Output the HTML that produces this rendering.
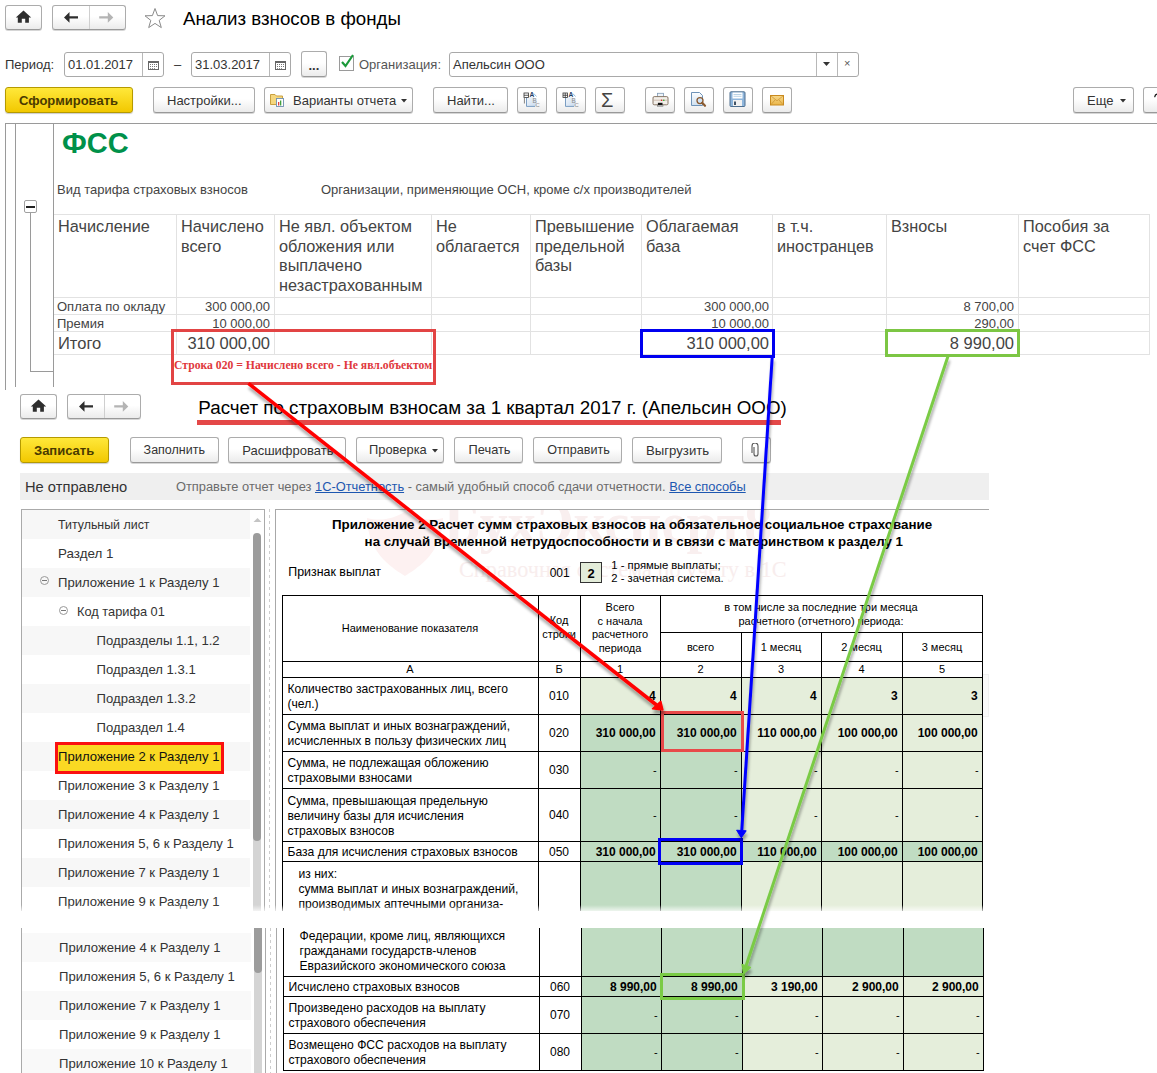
<!DOCTYPE html>
<html><head><meta charset="utf-8">
<style>
*{box-sizing:border-box;margin:0;padding:0}
html,body{width:1157px;height:1073px;overflow:hidden;background:#fff}
body{position:relative;font-family:"Liberation Sans",sans-serif;color:#333}
.a{position:absolute}
.t{position:absolute;white-space:nowrap;line-height:1}
.btn{position:absolute;border:1px solid #acacac;border-bottom-color:#999;border-radius:3px;background:linear-gradient(#fff 45%,#ebebeb);box-shadow:0 1px 0 rgba(0,0,0,.16)}
.ybtn{position:absolute;border:1px solid #b59a00;border-radius:3px;background:linear-gradient(#ffe83a,#f2c800);box-shadow:0 1px 1px rgba(0,0,0,.2)}
.inp{position:absolute;border:1px solid #a9a9a9;border-radius:3px;background:#fff}
.hl{position:absolute;height:1px;background:#e2e2e2}
.vl{position:absolute;width:1px;background:#e2e2e2}
.gl{position:absolute;background:#9a9a9a}
</style></head><body>

<!-- ============ TOP WINDOW ============ -->
<div class="btn" style="left:5px;top:5px;width:37px;height:25px"></div>

<div class="btn" style="left:52px;top:5px;width:74px;height:25px"></div>
<div class="a" style="left:89px;top:6px;width:1px;height:23px;background:#cfcfcf"></div>
<svg class="a" style="left:0px;top:0px" width="130" height="30" viewBox="0 0 130 30"><path d="M23.5 10.5 L15.8 17.5 H17.8 V22.8 H21.8 V18.7 H25.2 V22.8 H28.9 V17.5 H31.2 Z" fill="#2e2e2e"/><path d="M64 17.4 L69.5 12 V16.2 H78 V18.6 H69.5 V22.8 Z" fill="#2e2e2e"/><path d="M113.3 17.4 L107.8 12 V16.2 H99.2 V18.6 H107.8 V22.8 Z" fill="#b4b4b4"/></svg>


<svg class="a" style="left:143px;top:7px" width="24" height="22" viewBox="0 0 24 22"><path d="M12 1.5 L14.6 8.6 L22 8.8 L16.2 13.4 L18.3 20.6 L12 16.4 L5.7 20.6 L7.8 13.4 L2 8.8 L9.4 8.6 Z" fill="none" stroke="#8a8a8a" stroke-width="1"/></svg>
<div class="t" style="left:183px;top:10px;font-size:18.7px;color:#000">Анализ взносов в фонды</div>

<!-- period row -->
<div class="t" style="left:5px;top:58px;font-size:13px;color:#333">Период:</div>
<div class="inp" style="left:64px;top:52px;width:100px;height:25px"></div>
<div class="a" style="left:142px;top:53px;width:1px;height:23px;background:#b8b8b8"></div>
<div class="t" style="left:68px;top:58px;font-size:13px;color:#333">01.01.2017</div>
<svg class="a" style="left:148px;top:61px" width="11" height="9" viewBox="0 0 11 9"><rect x="0.5" y="0.5" width="10" height="8" fill="#fff" stroke="#666" stroke-width="1"/><rect x="0.5" y="0.5" width="10" height="1.5" fill="#666"/><g fill="#777"><rect x="2" y="3" width="1" height="1"/><rect x="4" y="3" width="1" height="1"/><rect x="6" y="3" width="1" height="1"/><rect x="8" y="3" width="1" height="1"/><rect x="2" y="5" width="1" height="1"/><rect x="4" y="5" width="1" height="1"/><rect x="6" y="5" width="1" height="1"/><rect x="8" y="5" width="1" height="1"/><rect x="2" y="7" width="1" height="0.8"/><rect x="4" y="7" width="1" height="0.8"/><rect x="6" y="7" width="1" height="0.8"/></g></svg>
<div class="t" style="left:174px;top:58px;font-size:13px;color:#333">–</div>
<div class="inp" style="left:191px;top:52px;width:100px;height:25px"></div>
<div class="a" style="left:269px;top:53px;width:1px;height:23px;background:#b8b8b8"></div>
<div class="t" style="left:195px;top:58px;font-size:13px;color:#333">31.03.2017</div>
<svg class="a" style="left:275px;top:61px" width="11" height="9" viewBox="0 0 11 9"><rect x="0.5" y="0.5" width="10" height="8" fill="#fff" stroke="#666" stroke-width="1"/><rect x="0.5" y="0.5" width="10" height="1.5" fill="#666"/><g fill="#777"><rect x="2" y="3" width="1" height="1"/><rect x="4" y="3" width="1" height="1"/><rect x="6" y="3" width="1" height="1"/><rect x="8" y="3" width="1" height="1"/><rect x="2" y="5" width="1" height="1"/><rect x="4" y="5" width="1" height="1"/><rect x="6" y="5" width="1" height="1"/><rect x="8" y="5" width="1" height="1"/><rect x="2" y="7" width="1" height="0.8"/><rect x="4" y="7" width="1" height="0.8"/><rect x="6" y="7" width="1" height="0.8"/></g></svg>
<div class="btn" style="left:301px;top:51px;width:26px;height:26px"></div>
<div class="t" style="left:308.5px;top:59px;font-size:13px;font-weight:bold;color:#333">...</div>
<div class="a" style="left:339px;top:56px;width:15px;height:15px;border:1px solid #9a9a9a;background:#fff"></div>
<svg class="a" style="left:339px;top:53px" width="16" height="17" viewBox="0 0 16 17"><path d="M3 9 L6.5 13 L14 2" fill="none" stroke="#1a9a3a" stroke-width="2.2"/></svg>
<div class="t" style="left:359px;top:58px;font-size:13px;color:#555">Организация:</div>
<div class="inp" style="left:449px;top:52px;width:410px;height:25px"></div>
<div class="a" style="left:816px;top:53px;width:1px;height:23px;background:#b8b8b8"></div>
<div class="a" style="left:837px;top:53px;width:1px;height:23px;background:#b8b8b8"></div>
<div class="t" style="left:453px;top:58px;font-size:13px;color:#333">Апельсин ООО</div>
<svg class="a" style="left:823px;top:62px" width="8" height="5"><path d="M0 0H7L3.5 4Z" fill="#333"/></svg>
<div class="t" style="left:844px;top:58px;font-size:11px;color:#555">×</div>

<!-- toolbar -->
<div class="ybtn" style="left:5px;top:87px;width:128px;height:26px"></div>
<div class="t" style="left:19px;top:94px;font-size:13px;font-weight:bold;color:#4a3a00">Сформировать</div>
<div class="btn" style="left:153px;top:87px;width:102px;height:26px"></div>
<div class="t" style="left:167px;top:94px;font-size:13px;color:#333">Настройки...</div>
<div class="btn" style="left:264px;top:87px;width:149px;height:26px"></div>
<div class="t" style="left:293px;top:94px;font-size:13px;color:#333">Варианты отчета</div>
<svg class="a" style="left:401px;top:99px" width="7" height="4"><path d="M0 0H6L3 3.5Z" fill="#333"/></svg>
<div class="btn" style="left:433px;top:87px;width:75px;height:26px"></div>
<div class="t" style="left:447px;top:94px;font-size:13px;color:#333">Найти...</div>
<div class="btn" style="left:517px;top:87px;width:30px;height:26px"></div>
<div class="btn" style="left:556px;top:87px;width:30px;height:26px"></div>
<svg class="a" style="left:517px;top:87px" width="30" height="26" viewBox="0 0 30 26"><defs><linearGradient id="pg517" x1="0" y1="0" x2="1" y2="1"><stop offset="0" stop-color="#f2f7fc"/><stop offset="1" stop-color="#c9daee"/></linearGradient></defs><path d="M9.5 10 H16.5 L19.5 13 V19.5 H9.5 Z" fill="url(#pg517)"/><path d="M9.5 10.5 V19.4 H18" fill="none" stroke="#6d93bb" stroke-width="0.9"/><path d="M16.8 6.5 L19.5 9.5" stroke="#9ab8d8" stroke-width="1"/><rect x="7" y="6" width="4.5" height="4.5" fill="#fff" stroke="#333" stroke-width="0.8"/><path d="M7 8.25 H11.5" stroke="#333" stroke-width="0.8"/><path d="M7.4 10.5 V16.5" stroke="#666" stroke-width="0.8"/><text x="12.6" y="9.9" font-family="Liberation Sans" font-weight="bold" font-size="6.6" fill="#1f3f66">A</text><text x="15.5" y="15.6" font-family="Liberation Sans" font-size="6.4" fill="#8c8c8c">B</text><text x="18.5" y="19.8" font-family="Liberation Sans" font-size="5.8" fill="#8c8c8c">C</text></svg>
<svg class="a" style="left:556px;top:87px" width="30" height="26" viewBox="0 0 30 26"><defs><linearGradient id="pg556" x1="0" y1="0" x2="1" y2="1"><stop offset="0" stop-color="#f2f7fc"/><stop offset="1" stop-color="#c9daee"/></linearGradient></defs><path d="M9.5 10 H16.5 L19.5 13 V19.5 H9.5 Z" fill="url(#pg556)"/><path d="M9.5 10.5 V19.4 H18" fill="none" stroke="#6d93bb" stroke-width="0.9"/><path d="M16.8 6.5 L19.5 9.5" stroke="#9ab8d8" stroke-width="1"/><rect x="7" y="6" width="4.5" height="4.5" fill="#fff" stroke="#333" stroke-width="0.8"/><path d="M7 8.25 H11.5 M9.25 6 V10.5" stroke="#333" stroke-width="0.8"/><text x="12.6" y="9.9" font-family="Liberation Sans" font-weight="bold" font-size="6.6" fill="#1f3f66">A</text><text x="15.5" y="15.6" font-family="Liberation Sans" font-size="6.4" fill="#8c8c8c">B</text><text x="18.5" y="19.8" font-family="Liberation Sans" font-size="5.8" fill="#8c8c8c">C</text></svg>
<div class="btn" style="left:595px;top:87px;width:30px;height:26px"></div>
<div class="t" style="left:601px;top:90px;font-size:20px;color:#444">Σ</div>
<div class="btn" style="left:645px;top:87px;width:30px;height:26px"></div>
<div class="btn" style="left:684px;top:87px;width:30px;height:26px"></div>
<div class="btn" style="left:723px;top:87px;width:30px;height:26px"></div>
<div class="btn" style="left:762px;top:87px;width:30px;height:26px"></div>
<svg class="a" style="left:645px;top:87px" width="30" height="26" viewBox="0 0 30 26"><rect x="12.5" y="6.3" width="6" height="5" fill="#eef4fa" stroke="#7f9ab5" stroke-width="0.8"/><path d="M9.2 9.6 H21.8 Q23 9.6 23 11 V16.6 Q23 17.8 21.8 17.8 H9.2 Q8 17.8 8 16.6 V11 Q8 9.6 9.2 9.6Z" fill="#f3efea" stroke="#7d6a58" stroke-width="0.9"/><path d="M8.5 13.2 H22.5" stroke="#c0a898" stroke-width="0.7"/><circle cx="16.6" cy="13.2" r="0.8" fill="#e02020"/><circle cx="18.8" cy="13.2" r="0.8" fill="#20b020"/><rect x="12.9" y="15.8" width="4.6" height="2.6" fill="#111"/><rect x="12.4" y="18.2" width="5.6" height="1.4" fill="#fff" stroke="#666" stroke-width="0.5"/></svg>
<svg class="a" style="left:684px;top:87px" width="30" height="26" viewBox="0 0 30 26">
<defs><linearGradient id="dg" x1="0" y1="0" x2="0" y2="1"><stop offset="0" stop-color="#fdfeff"/><stop offset="1" stop-color="#cfe0f0"/></linearGradient></defs>
<path d="M7.5 5.5 H15.5 L18.5 8.5 V18.5 H7.5 Z" fill="url(#dg)" stroke="#6e93b8" stroke-width="1"/>
<circle cx="16" cy="13.6" r="3" fill="#cfe3f7" stroke="#8a5a30" stroke-width="1.3"/>
<path d="M18.2 15.8 L21 18.8" stroke="#8a5a30" stroke-width="2.2" stroke-linecap="round"/>
</svg>
<svg class="a" style="left:723px;top:87px" width="30" height="26" viewBox="0 0 30 26">
<rect x="7" y="4.8" width="15" height="14.7" rx="1" fill="#8fb6dc" stroke="#4f6f8f" stroke-width="1"/>
<rect x="9.5" y="5.5" width="10" height="6" fill="#fff"/>
<path d="M10.5 7.5 H18.5 M10.5 9.3 H18.5" stroke="#a8c8e0" stroke-width="0.8"/>
<rect x="10" y="13" width="9" height="6" fill="#f2f2f2"/>
<rect x="11" y="14.5" width="2" height="3.5" fill="#445566"/>
</svg>
<svg class="a" style="left:762px;top:87px" width="30" height="26" viewBox="0 0 30 26">
<defs><linearGradient id="eg" x1="0" y1="0" x2="0" y2="1"><stop offset="0" stop-color="#f8d98a"/><stop offset="1" stop-color="#eab54a"/></linearGradient></defs>
<rect x="8.5" y="8.5" width="13" height="9.5" fill="url(#eg)" stroke="#c98a1e" stroke-width="1"/>
<path d="M8.8 8.8 L15 13.8 L21.2 8.8 M8.8 17.8 L13 13 M21.2 17.8 L17 13" fill="none" stroke="#c99030" stroke-width="0.7"/>
</svg>
<svg class="a" style="left:264px;top:87px" width="26" height="26" viewBox="0 0 26 26">
<path d="M6.5 7.5 H11 L12.5 9 H18.5 V17.5 H6.5 Z" fill="#f5d77e" stroke="#c9a040" stroke-width="1"/>
<rect x="12.5" y="11.5" width="7" height="8" fill="#fff" stroke="#6f8fb0" stroke-width="0.9"/>
<rect x="14" y="15" width="1.3" height="3.5" fill="#e04040"/><rect x="16" y="13.5" width="1.3" height="5" fill="#40a040"/>
</svg>
<div class="btn" style="left:1073px;top:87px;width:61px;height:26px"></div>
<div class="t" style="left:1087px;top:94px;font-size:13px;color:#333">Еще</div>
<svg class="a" style="left:1120px;top:99px" width="7" height="4"><path d="M0 0H6L3 3.5Z" fill="#333"/></svg>
<div class="btn" style="left:1143px;top:87px;width:30px;height:26px"></div>
<svg class="a" style="left:1153px;top:92px" width="4" height="6" viewBox="0 0 4 6"><path d="M1.8 4.7 Q2 2.6 4 2.2" fill="none" stroke="#111" stroke-width="1.3" stroke-linecap="round"/></svg>

<!-- report frame -->
<div class="gl" style="left:5px;top:123px;width:1152px;height:1px"></div>
<div class="gl" style="left:5px;top:123px;width:1px;height:267px"></div>
<div class="gl" style="left:15px;top:123px;width:1px;height:264px"></div>
<div class="gl" style="left:53px;top:123px;width:1px;height:264px"></div>


<!-- FSS -->
<div class="t" style="left:62px;top:129px;font-size:29px;font-weight:bold;color:#00914a">ФСС</div>
<div class="t" style="left:57px;top:183px;font-size:13px;color:#444">Вид тарифа страховых взносов</div>
<div class="t" style="left:321px;top:183px;font-size:13px;color:#444">Организации, применяющие ОСН, кроме с/х производителей</div>
<div class="a" style="left:24px;top:200px;width:13px;height:13px;border:1px solid #a0a0a0;border-radius:2px;background:#fff"></div>
<div class="a" style="left:26px;top:206px;width:9px;height:1.5px;background:#222"></div>
<div class="gl" style="left:30px;top:213px;width:1px;height:158px"></div>
<div class="gl" style="left:30px;top:371px;width:23px;height:1px"></div>
<div class="hl" style="left:54px;top:214px;width:1096px"></div>
<div class="hl" style="left:54px;top:297px;width:1096px"></div>
<div class="hl" style="left:54px;top:314px;width:1096px"></div>
<div class="hl" style="left:54px;top:331px;width:1096px"></div>
<div class="hl" style="left:54px;top:354px;width:1096px"></div>
<div class="vl" style="left:176px;top:214px;height:141px"></div>
<div class="vl" style="left:274px;top:214px;height:141px"></div>
<div class="vl" style="left:431px;top:214px;height:141px"></div>
<div class="vl" style="left:530px;top:214px;height:141px"></div>
<div class="vl" style="left:641px;top:214px;height:141px"></div>
<div class="vl" style="left:772px;top:214px;height:141px"></div>
<div class="vl" style="left:886px;top:214px;height:141px"></div>
<div class="vl" style="left:1018px;top:214px;height:141px"></div>
<div class="vl" style="left:1149px;top:214px;height:141px"></div>
<div class="a" style="left:58px;top:216.8px;font-size:16.3px;line-height:19.8px;color:#444;white-space:nowrap">Начисление</div>
<div class="a" style="left:181px;top:216.8px;font-size:16.3px;line-height:19.8px;color:#444;white-space:nowrap">Начислено<br>всего</div>
<div class="a" style="left:279px;top:216.8px;font-size:16.3px;line-height:19.8px;color:#444;white-space:nowrap">Не явл. объектом<br>обложения или<br>выплачено<br>незастрахованным</div>
<div class="a" style="left:436px;top:216.8px;font-size:16.3px;line-height:19.8px;color:#444;white-space:nowrap">Не<br>облагается</div>
<div class="a" style="left:535px;top:216.8px;font-size:16.3px;line-height:19.8px;color:#444;white-space:nowrap">Превышение<br>предельной<br>базы</div>
<div class="a" style="left:646px;top:216.8px;font-size:16.3px;line-height:19.8px;color:#444;white-space:nowrap">Облагаемая<br>база</div>
<div class="a" style="left:777px;top:216.8px;font-size:16.3px;line-height:19.8px;color:#444;white-space:nowrap">в т.ч.<br>иностранцев</div>
<div class="a" style="left:891px;top:216.8px;font-size:16.3px;line-height:19.8px;color:#444;white-space:nowrap">Взносы</div>
<div class="a" style="left:1023px;top:216.8px;font-size:16.3px;line-height:19.8px;color:#444;white-space:nowrap">Пособия за<br>счет ФСС</div>

<div class="t" style="left:57px;top:300px;font-size:13px;color:#444">Оплата по окладу</div>
<div class="t" style="left:57px;top:317px;font-size:13px;color:#444">Премия</div>
<div class="t" style="left:58px;top:335px;font-size:16.5px;color:#444">Итого</div>
<div class="t" style="right:887px;top:300px;font-size:13px;color:#444">300 000,00</div>
<div class="t" style="right:887px;top:317px;font-size:13px;color:#444">10 000,00</div>
<div class="t" style="right:887px;top:335px;font-size:16.5px;color:#444">310 000,00</div>
<div class="t" style="right:388px;top:300px;font-size:13px;color:#444">300 000,00</div>
<div class="t" style="right:388px;top:317px;font-size:13px;color:#444">10 000,00</div>
<div class="t" style="right:388px;top:335px;font-size:16.5px;color:#444">310 000,00</div>
<div class="t" style="right:143px;top:300px;font-size:13px;color:#444">8 700,00</div>
<div class="t" style="right:143px;top:317px;font-size:13px;color:#444">290,00</div>
<div class="t" style="right:143px;top:335px;font-size:16.5px;color:#444">8 990,00</div>
<div class="a" style="left:171px;top:329px;width:265px;height:56px;border:3px solid #e24444"></div>
<div class="t" style="left:174px;top:360px;font-family:'Liberation Serif',serif;font-weight:bold;font-size:11.7px;color:#e0383c">Строка 020 = Начислено всего - Не явл.объектом</div>
<div class="a" style="left:640px;top:329px;width:135px;height:29px;border:3px solid #0000f0"></div>
<div class="a" style="left:885px;top:329px;width:135px;height:28px;border:3px solid #7cc644"></div>

<!-- ============ WINDOW 2 ============ -->
<div class="btn" style="left:20px;top:394px;width:37px;height:25px"></div>

<div class="btn" style="left:67px;top:394px;width:74px;height:25px"></div>
<div class="a" style="left:104px;top:395px;width:1px;height:23px;background:#cfcfcf"></div>
<svg class="a" style="left:15px;top:389px" width="130" height="30" viewBox="0 0 130 30"><path d="M23.5 10.5 L15.8 17.5 H17.8 V22.8 H21.8 V18.7 H25.2 V22.8 H28.9 V17.5 H31.2 Z" fill="#2e2e2e"/><path d="M64 17.4 L69.5 12 V16.2 H78 V18.6 H69.5 V22.8 Z" fill="#2e2e2e"/><path d="M113.3 17.4 L107.8 12 V16.2 H99.2 V18.6 H107.8 V22.8 Z" fill="#b4b4b4"/></svg>


<div class="t" style="left:198.3px;top:398.6px;font-size:18.8px;color:#000">Расчет по страховым взносам за 1 квартал 2017 г. (Апельсин ООО)</div>
<div class="a" style="left:197px;top:420px;width:584px;height:5px;background:#e44848"></div>
<div class="ybtn" style="left:20px;top:437px;width:89px;height:26px"></div>
<div class="t" style="left:34px;top:444px;font-size:13px;font-weight:bold;color:#4a3a00">Записать</div>
<div class="btn" style="left:130px;top:437px;width:89px;height:26px"></div>
<div class="t" style="left:143.6px;top:444px;font-size:12.5px;color:#333">Заполнить</div>
<div class="btn" style="left:228px;top:437px;width:118px;height:26px"></div>
<div class="t" style="left:242.2px;top:444px;font-size:13px;color:#333">Расшифровать</div>
<div class="btn" style="left:356px;top:437px;width:88px;height:26px"></div>
<div class="t" style="left:369px;top:444px;font-size:12.9px;color:#333">Проверка</div>
<div class="btn" style="left:454px;top:437px;width:69px;height:26px"></div>
<div class="t" style="left:468.6px;top:444px;font-size:12.8px;color:#333">Печать</div>
<div class="btn" style="left:533px;top:437px;width:89px;height:26px"></div>
<div class="t" style="left:547.3px;top:444px;font-size:12.6px;color:#333">Отправить</div>
<div class="btn" style="left:632px;top:437px;width:90px;height:26px"></div>
<div class="t" style="left:646px;top:444px;font-size:13.2px;color:#333">Выгрузить</div>
<div class="btn" style="left:742px;top:437px;width:29px;height:26px"></div>
<svg class="a" style="left:432px;top:449px" width="7" height="4"><path d="M0 0H6L3 3.5Z" fill="#333"/></svg>
<svg class="a" style="left:751px;top:443px" width="10" height="15" viewBox="0 0 10 15"><path d="M3 4 V11 A2 2 0 0 0 7 11 V3 A3 3 0 0 0 1 3 V10" fill="none" stroke="#555" stroke-width="1.1"/></svg>
<div class="a" style="left:20px;top:473px;width:969px;height:27px;background:#efefef"></div>
<div class="t" style="left:25px;top:479.5px;font-size:14.7px;color:#333">Не отправлено</div>
<div class="t" style="left:176px;top:481px;font-size:12.85px;color:#6b6b6b">Отправьте отчет через <span style="color:#1d57b0;text-decoration:underline">1С-Отчетность</span> - самый удобный способ сдачи отчетности. <span style="color:#1d57b0;text-decoration:underline">Все способы</span></div>
<div class="a" style="left:21px;top:509px;width:244px;height:403px;border:1px solid #aaa;border-bottom:none;background:#fff"></div>
<div class="a" style="left:22px;top:510px;width:228px;height:29px;background:#f7f7f7"></div>
<div class="t" style="left:58px;top:519.0px;font-size:12.4px;color:#333">Титульный лист</div>
<div class="t" style="left:58px;top:547.2px;font-size:13.4px;color:#333">Раздел 1</div>
<div class="a" style="left:22px;top:568px;width:228px;height:29px;background:#f7f7f7"></div>
<div class="t" style="left:58px;top:576.4px;font-size:13.1px;color:#333">Приложение 1 к Разделу 1</div>
<div class="a" style="left:40px;top:576px;width:9px;height:9px;border:1px solid #999;border-radius:50%"></div><div class="a" style="left:42px;top:580px;width:5px;height:1px;background:#777"></div>
<div class="t" style="left:77px;top:605.7px;font-size:12.8px;color:#333">Код тарифа 01</div>
<div class="a" style="left:59px;top:606px;width:9px;height:9px;border:1px solid #999;border-radius:50%"></div><div class="a" style="left:61px;top:610px;width:5px;height:1px;background:#777"></div>
<div class="a" style="left:22px;top:626px;width:228px;height:29px;background:#f7f7f7"></div>
<div class="t" style="left:96.6px;top:634.4px;font-size:13.1px;color:#333">Подразделы 1.1, 1.2</div>
<div class="t" style="left:96.6px;top:663.4px;font-size:13.1px;color:#333">Подраздел 1.3.1</div>
<div class="a" style="left:22px;top:684px;width:228px;height:29px;background:#f7f7f7"></div>
<div class="t" style="left:96.6px;top:692.4px;font-size:13.1px;color:#333">Подраздел 1.3.2</div>
<div class="t" style="left:96.6px;top:721.4px;font-size:13.1px;color:#333">Подраздел 1.4</div>
<div class="a" style="left:22px;top:742px;width:228px;height:29px;background:#f7f7f7"></div>
<div class="a" style="left:55px;top:742px;width:169px;height:32px;background:#fad923;border:3px solid #fa1010"></div>
<div class="t" style="left:58px;top:750.4px;font-size:13.1px;color:#111">Приложение 2 к Разделу 1</div>
<div class="t" style="left:58px;top:779.4px;font-size:13.1px;color:#333">Приложение 3 к Разделу 1</div>
<div class="a" style="left:22px;top:800px;width:228px;height:29px;background:#f7f7f7"></div>
<div class="t" style="left:58px;top:808.4px;font-size:13.1px;color:#333">Приложение 4 к Разделу 1</div>
<div class="t" style="left:58px;top:837.4px;font-size:13.1px;color:#333">Приложения 5, 6 к Разделу 1</div>
<div class="a" style="left:22px;top:858px;width:228px;height:29px;background:#f7f7f7"></div>
<div class="t" style="left:58px;top:866.4px;font-size:13.1px;color:#333">Приложение 7 к Разделу 1</div>
<div class="t" style="left:58px;top:895.4px;font-size:13.1px;color:#333">Приложение 9 к Разделу 1</div>
<div class="a" style="left:253px;top:780px;width:8px;height:132px;background:#d4d4d4"></div>
<div class="a" style="left:253px;top:533px;width:8px;height:308px;border-radius:4px;background:#9c9c9c"></div>
<svg class="a" style="left:253px;top:517px" width="9" height="6"><path d="M0.5 5H8.5L4.5 1Z" fill="#c4c4c4"/></svg>
<div class="a" style="left:269px;top:509px;width:1px;height:403px;background:repeating-linear-gradient(#cdcdcd 0 3px,transparent 3px 6px)"></div>
<div class="a" style="left:275px;top:509px;width:714px;height:403px;border-left:1px solid #a8a8a8;border-top:1px solid #a8a8a8"></div>

<!-- ============ REPORT ============ -->
<svg class="a" style="left:364px;top:510px" width="82" height="68" viewBox="0 0 82 68"><path d="M41 66 C18 52 4 36 3 8 C18 12 30 8 41 2 C52 8 64 12 79 8 C78 36 64 52 41 66Z" fill="#fdf1f1"/></svg>
<div class="a" style="left:276px;top:510px;width:712px;height:60px;overflow:hidden"><div class="t" style="left:168px;top:-15px;font-family:'Liberation Serif',serif;font-weight:bold;font-size:56px;color:#f9efef">БухЭксперт8</div></div>
<div class="t" style="left:459px;top:559px;font-family:'Liberation Serif',serif;font-size:22.3px;color:#f8eded">Справочная система по учету в 1С</div>
<div class="t" style="left:331.9px;top:518.3px;font-size:13.35px;font-weight:bold;color:#000">Приложение 2 Расчет сумм страховых взносов на обязательное социальное страхование</div>
<div class="t" style="left:364.6px;top:534.6px;font-size:13.3px;font-weight:bold;color:#000">на случай временной нетрудоспособности и в связи с материнством к разделу 1</div>
<div class="t" style="left:288.3px;top:566.2px;font-size:12.4px;color:#000">Признак выплат</div>
<div class="t" style="left:549.7px;top:566.8px;font-size:12px;color:#000">001</div>
<div class="a" style="left:580px;top:562px;width:22px;height:21px;background:#e3ecd9;border:1px solid #333"></div>
<div class="t" style="left:580.0px;width:22.0px;text-align:center;top:566.5px;font-size:13px;font-weight:bold;color:#000">2</div>
<div class="t" style="left:611.3px;top:559.5px;font-size:11.3px;color:#000">1 - прямые выплаты;</div>
<div class="t" style="left:611.3px;top:573.2px;font-size:11.3px;color:#000">2 - зачетная система.</div>
<div class="a" style="left:580px;top:677px;width:80px;height:37px;background:#e5eedb"></div>
<div class="a" style="left:660px;top:677px;width:81px;height:37px;background:#e5eedb"></div>
<div class="a" style="left:741px;top:677px;width:80px;height:37px;background:#e5eedb"></div>
<div class="a" style="left:821px;top:677px;width:81px;height:37px;background:#e5eedb"></div>
<div class="a" style="left:902px;top:677px;width:80px;height:37px;background:#e5eedb"></div>
<div class="a" style="left:580px;top:714px;width:80px;height:37px;background:#c0dcc2"></div>
<div class="a" style="left:660px;top:714px;width:81px;height:37px;background:#c0dcc2"></div>
<div class="a" style="left:741px;top:714px;width:80px;height:37px;background:#e5eedb"></div>
<div class="a" style="left:821px;top:714px;width:81px;height:37px;background:#e5eedb"></div>
<div class="a" style="left:902px;top:714px;width:80px;height:37px;background:#e5eedb"></div>
<div class="a" style="left:580px;top:751px;width:80px;height:37px;background:#c0dcc2"></div>
<div class="a" style="left:660px;top:751px;width:81px;height:37px;background:#c0dcc2"></div>
<div class="a" style="left:741px;top:751px;width:80px;height:37px;background:#e5eedb"></div>
<div class="a" style="left:821px;top:751px;width:81px;height:37px;background:#e5eedb"></div>
<div class="a" style="left:902px;top:751px;width:80px;height:37px;background:#e5eedb"></div>
<div class="a" style="left:580px;top:788px;width:80px;height:53px;background:#c0dcc2"></div>
<div class="a" style="left:660px;top:788px;width:81px;height:53px;background:#c0dcc2"></div>
<div class="a" style="left:741px;top:788px;width:80px;height:53px;background:#e5eedb"></div>
<div class="a" style="left:821px;top:788px;width:81px;height:53px;background:#e5eedb"></div>
<div class="a" style="left:902px;top:788px;width:80px;height:53px;background:#e5eedb"></div>
<div class="a" style="left:580px;top:841px;width:80px;height:20px;background:#c0dcc2"></div>
<div class="a" style="left:660px;top:841px;width:81px;height:20px;background:#c0dcc2"></div>
<div class="a" style="left:741px;top:841px;width:80px;height:20px;background:#c0dcc2"></div>
<div class="a" style="left:821px;top:841px;width:81px;height:20px;background:#c0dcc2"></div>
<div class="a" style="left:902px;top:841px;width:80px;height:20px;background:#c0dcc2"></div>
<div class="a" style="left:580px;top:861px;width:80px;height:51px;background:#c0dcc2"></div>
<div class="a" style="left:660px;top:861px;width:81px;height:51px;background:#c0dcc2"></div>
<div class="a" style="left:741px;top:861px;width:80px;height:51px;background:#e5eedb"></div>
<div class="a" style="left:821px;top:861px;width:81px;height:51px;background:#e5eedb"></div>
<div class="a" style="left:902px;top:861px;width:80px;height:51px;background:#e5eedb"></div>
<div class="a" style="left:282px;top:595px;width:701px;height:1px;background:#000"></div>
<div class="a" style="left:660px;top:632px;width:323px;height:1px;background:#000"></div>
<div class="a" style="left:282px;top:661px;width:701px;height:1px;background:#000"></div>
<div class="a" style="left:282px;top:677px;width:701px;height:1px;background:#000"></div>
<div class="a" style="left:282px;top:714px;width:701px;height:1px;background:#000"></div>
<div class="a" style="left:282px;top:751px;width:701px;height:1px;background:#000"></div>
<div class="a" style="left:282px;top:788px;width:701px;height:1px;background:#000"></div>
<div class="a" style="left:282px;top:841px;width:701px;height:1px;background:#000"></div>
<div class="a" style="left:282px;top:861px;width:701px;height:1px;background:#000"></div>
<div class="a" style="left:282px;top:595px;width:1px;height:318px;background:#000"></div>
<div class="a" style="left:538px;top:595px;width:1px;height:318px;background:#000"></div>
<div class="a" style="left:580px;top:595px;width:1px;height:318px;background:#000"></div>
<div class="a" style="left:660px;top:595px;width:1px;height:318px;background:#000"></div>
<div class="a" style="left:741px;top:632px;width:1px;height:281px;background:#000"></div>
<div class="a" style="left:821px;top:632px;width:1px;height:281px;background:#000"></div>
<div class="a" style="left:902px;top:632px;width:1px;height:281px;background:#000"></div>
<div class="a" style="left:982px;top:595px;width:1px;height:318px;background:#000"></div>
<div class="t" style="left:282.0px;width:256.0px;text-align:center;top:622.5px;font-size:11px;color:#000">Наименование показателя</div>
<div class="t" style="left:538.0px;width:42.0px;text-align:center;top:615.4px;font-size:11px;color:#000">Код</div>
<div class="t" style="left:538.0px;width:42.0px;text-align:center;top:628.9px;font-size:11px;color:#000">строки</div>
<div class="t" style="left:580.0px;width:80.0px;text-align:center;top:601.7px;font-size:11px;color:#000">Всего</div>
<div class="t" style="left:580.0px;width:80.0px;text-align:center;top:615.5px;font-size:11px;color:#000">с начала</div>
<div class="t" style="left:580.0px;width:80.0px;text-align:center;top:629.3px;font-size:11px;color:#000">расчетного</div>
<div class="t" style="left:580.0px;width:80.0px;text-align:center;top:643.1px;font-size:11px;color:#000">периода</div>
<div class="t" style="left:660.0px;width:322.0px;text-align:center;top:601.9px;font-size:11px;color:#000">в том числе за последние три месяца</div>
<div class="t" style="left:660.0px;width:322.0px;text-align:center;top:616.3px;font-size:11px;color:#000">расчетного (отчетного) периода:</div>
<div class="t" style="left:660.0px;width:81.0px;text-align:center;top:641.5px;font-size:11px;color:#000">всего</div>
<div class="t" style="left:741.0px;width:80.0px;text-align:center;top:641.5px;font-size:11px;color:#000">1 месяц</div>
<div class="t" style="left:821.0px;width:81.0px;text-align:center;top:641.5px;font-size:11px;color:#000">2 месяц</div>
<div class="t" style="left:902.0px;width:80.0px;text-align:center;top:641.5px;font-size:11px;color:#000">3 месяц</div>
<div class="t" style="left:282.0px;width:256.0px;text-align:center;top:663.6px;font-size:11px;color:#000">А</div>
<div class="t" style="left:538.0px;width:42.0px;text-align:center;top:663.6px;font-size:11px;color:#000">Б</div>
<div class="t" style="left:580.0px;width:80.0px;text-align:center;top:663.6px;font-size:11px;color:#000">1</div>
<div class="t" style="left:660.0px;width:81.0px;text-align:center;top:663.6px;font-size:11px;color:#000">2</div>
<div class="t" style="left:741.0px;width:80.0px;text-align:center;top:663.6px;font-size:11px;color:#000">3</div>
<div class="t" style="left:821.0px;width:81.0px;text-align:center;top:663.6px;font-size:11px;color:#000">4</div>
<div class="t" style="left:902.0px;width:80.0px;text-align:center;top:663.6px;font-size:11px;color:#000">5</div>
<div class="t" style="left:287.5px;top:683.1px;font-size:12.12px;color:#000">Количество застрахованных лиц, всего</div>
<div class="t" style="left:287.5px;top:698.1px;font-size:12.12px;color:#000">(чел.)</div>
<div class="t" style="left:538.0px;width:42.0px;text-align:center;top:690.0px;font-size:12px;color:#000">010</div>
<div class="t" style="right:501.3px;top:690.0px;font-size:12px;font-weight:bold;color:#000">4</div>
<div class="t" style="right:420.3px;top:690.0px;font-size:12px;font-weight:bold;color:#000">4</div>
<div class="t" style="right:340.3px;top:690.0px;font-size:12px;font-weight:bold;color:#000">4</div>
<div class="t" style="right:259.3px;top:690.0px;font-size:12px;font-weight:bold;color:#000">3</div>
<div class="t" style="right:179.3px;top:690.0px;font-size:12px;font-weight:bold;color:#000">3</div>
<div class="t" style="left:287.5px;top:720.0px;font-size:12.12px;color:#000">Сумма выплат и иных вознаграждений,</div>
<div class="t" style="left:287.5px;top:735.0px;font-size:12.12px;color:#000">исчисленных в пользу физических лиц</div>
<div class="t" style="left:538.0px;width:42.0px;text-align:center;top:726.9px;font-size:12px;color:#000">020</div>
<div class="t" style="right:501.3px;top:726.9px;font-size:12px;font-weight:bold;color:#000">310 000,00</div>
<div class="t" style="right:420.3px;top:726.9px;font-size:12px;font-weight:bold;color:#000">310 000,00</div>
<div class="t" style="right:340.3px;top:726.9px;font-size:12px;font-weight:bold;color:#000">110 000,00</div>
<div class="t" style="right:259.3px;top:726.9px;font-size:12px;font-weight:bold;color:#000">100 000,00</div>
<div class="t" style="right:179.3px;top:726.9px;font-size:12px;font-weight:bold;color:#000">100 000,00</div>
<div class="t" style="left:287.5px;top:757.1px;font-size:12.12px;color:#000">Сумма, не подлежащая обложению</div>
<div class="t" style="left:287.5px;top:772.1px;font-size:12.12px;color:#000">страховыми взносами</div>
<div class="t" style="left:538.0px;width:42.0px;text-align:center;top:764.0px;font-size:12px;color:#000">030</div>
<div class="t" style="right:500.3px;top:764.8px;font-size:11px;color:#000">-</div>
<div class="t" style="right:419.3px;top:764.8px;font-size:11px;color:#000">-</div>
<div class="t" style="right:339.3px;top:764.8px;font-size:11px;color:#000">-</div>
<div class="t" style="right:258.3px;top:764.8px;font-size:11px;color:#000">-</div>
<div class="t" style="right:178.3px;top:764.8px;font-size:11px;color:#000">-</div>
<div class="t" style="left:287.5px;top:794.7px;font-size:12.12px;color:#000">Сумма, превышающая предельную</div>
<div class="t" style="left:287.5px;top:809.7px;font-size:12.12px;color:#000">величину базы для исчисления</div>
<div class="t" style="left:287.5px;top:824.7px;font-size:12.12px;color:#000">страховых взносов</div>
<div class="t" style="left:538.0px;width:42.0px;text-align:center;top:809.1px;font-size:12px;color:#000">040</div>
<div class="t" style="right:500.3px;top:809.9px;font-size:11px;color:#000">-</div>
<div class="t" style="right:419.3px;top:809.9px;font-size:11px;color:#000">-</div>
<div class="t" style="right:339.3px;top:809.9px;font-size:11px;color:#000">-</div>
<div class="t" style="right:258.3px;top:809.9px;font-size:11px;color:#000">-</div>
<div class="t" style="right:178.3px;top:809.9px;font-size:11px;color:#000">-</div>
<div class="t" style="left:287.5px;top:846.1px;font-size:12.12px;color:#000">База для исчисления страховых взносов</div>
<div class="t" style="left:538.0px;width:42.0px;text-align:center;top:845.5px;font-size:12px;color:#000">050</div>
<div class="t" style="right:501.3px;top:845.5px;font-size:12px;font-weight:bold;color:#000">310 000,00</div>
<div class="t" style="right:420.3px;top:845.5px;font-size:12px;font-weight:bold;color:#000">310 000,00</div>
<div class="t" style="right:340.3px;top:845.5px;font-size:12px;font-weight:bold;color:#000">110 000,00</div>
<div class="t" style="right:259.3px;top:845.5px;font-size:12px;font-weight:bold;color:#000">100 000,00</div>
<div class="t" style="right:179.3px;top:845.5px;font-size:12px;font-weight:bold;color:#000">100 000,00</div>
<div class="t" style="left:298.5px;top:868.2px;font-size:12.12px;color:#000">из них:</div>
<div class="t" style="left:298.5px;top:883.2px;font-size:12.12px;color:#000">сумма выплат и иных вознаграждений,</div>
<div class="t" style="left:298.5px;top:898.2px;font-size:12.12px;color:#000">производимых аптечными организа-</div>
<div class="a" style="left:0;top:905px;width:1157px;height:7px;background:linear-gradient(rgba(255,255,255,0),rgba(255,255,255,.85))"></div>
<div class="a" style="left:0;top:911px;width:1157px;height:17px;background:#fff"></div>
<div class="a" style="left:581px;top:928px;width:80px;height:48px;background:#c0dcc2"></div>
<div class="a" style="left:661px;top:928px;width:81px;height:48px;background:#c0dcc2"></div>
<div class="a" style="left:742px;top:928px;width:80px;height:48px;background:#c0dcc2"></div>
<div class="a" style="left:822px;top:928px;width:81px;height:48px;background:#c0dcc2"></div>
<div class="a" style="left:903px;top:928px;width:80px;height:48px;background:#c0dcc2"></div>
<div class="a" style="left:581px;top:976px;width:80px;height:20px;background:#c0dcc2"></div>
<div class="a" style="left:661px;top:976px;width:81px;height:20px;background:#c0dcc2"></div>
<div class="a" style="left:742px;top:976px;width:80px;height:20px;background:#e5eedb"></div>
<div class="a" style="left:822px;top:976px;width:81px;height:20px;background:#e5eedb"></div>
<div class="a" style="left:903px;top:976px;width:80px;height:20px;background:#e5eedb"></div>
<div class="a" style="left:581px;top:996px;width:80px;height:37px;background:#c0dcc2"></div>
<div class="a" style="left:661px;top:996px;width:81px;height:37px;background:#c0dcc2"></div>
<div class="a" style="left:742px;top:996px;width:80px;height:37px;background:#e5eedb"></div>
<div class="a" style="left:822px;top:996px;width:81px;height:37px;background:#e5eedb"></div>
<div class="a" style="left:903px;top:996px;width:80px;height:37px;background:#e5eedb"></div>
<div class="a" style="left:581px;top:1033px;width:80px;height:37px;background:#c0dcc2"></div>
<div class="a" style="left:661px;top:1033px;width:81px;height:37px;background:#c0dcc2"></div>
<div class="a" style="left:742px;top:1033px;width:80px;height:37px;background:#e5eedb"></div>
<div class="a" style="left:822px;top:1033px;width:81px;height:37px;background:#e5eedb"></div>
<div class="a" style="left:903px;top:1033px;width:80px;height:37px;background:#e5eedb"></div>
<div class="a" style="left:283px;top:976px;width:701px;height:1px;background:#000"></div>
<div class="a" style="left:283px;top:996px;width:701px;height:1px;background:#000"></div>
<div class="a" style="left:283px;top:1033px;width:701px;height:1px;background:#000"></div>
<div class="a" style="left:283px;top:1070px;width:701px;height:1px;background:#000"></div>
<div class="a" style="left:283px;top:928px;width:1px;height:143px;background:#000"></div>
<div class="a" style="left:539px;top:928px;width:1px;height:143px;background:#000"></div>
<div class="a" style="left:581px;top:928px;width:1px;height:143px;background:#000"></div>
<div class="a" style="left:661px;top:928px;width:1px;height:143px;background:#000"></div>
<div class="a" style="left:742px;top:928px;width:1px;height:143px;background:#000"></div>
<div class="a" style="left:822px;top:928px;width:1px;height:143px;background:#000"></div>
<div class="a" style="left:903px;top:928px;width:1px;height:143px;background:#000"></div>
<div class="a" style="left:983px;top:928px;width:1px;height:143px;background:#000"></div>
<div class="t" style="left:299.5px;top:929.9px;font-size:12.12px;color:#000">Федерации, кроме лиц, являющихся</div>
<div class="t" style="left:299.5px;top:944.9px;font-size:12.12px;color:#000">гражданами государств-членов</div>
<div class="t" style="left:299.5px;top:959.9px;font-size:12.12px;color:#000">Евразийского экономического союза</div>
<div class="t" style="left:288.5px;top:981.2px;font-size:12.12px;color:#000">Исчислено страховых взносов</div>
<div class="t" style="left:539.0px;width:42.0px;text-align:center;top:980.6px;font-size:12px;color:#000">060</div>
<div class="t" style="right:500.3px;top:980.6px;font-size:12px;font-weight:bold;color:#000">8 990,00</div>
<div class="t" style="right:419.3px;top:980.6px;font-size:12px;font-weight:bold;color:#000">8 990,00</div>
<div class="t" style="right:339.3px;top:980.6px;font-size:12px;font-weight:bold;color:#000">3 190,00</div>
<div class="t" style="right:258.3px;top:980.6px;font-size:12px;font-weight:bold;color:#000">2 900,00</div>
<div class="t" style="right:178.3px;top:980.6px;font-size:12px;font-weight:bold;color:#000">2 900,00</div>
<div class="t" style="left:288.5px;top:1002.1px;font-size:12.12px;color:#000">Произведено расходов на выплату</div>
<div class="t" style="left:288.5px;top:1017.1px;font-size:12.12px;color:#000">страхового обеспечения</div>
<div class="t" style="left:539.0px;width:42.0px;text-align:center;top:1009.0px;font-size:12px;color:#000">070</div>
<div class="t" style="right:499.3px;top:1009.9px;font-size:11px;color:#000">-</div>
<div class="t" style="right:418.3px;top:1009.9px;font-size:11px;color:#000">-</div>
<div class="t" style="right:338.3px;top:1009.9px;font-size:11px;color:#000">-</div>
<div class="t" style="right:257.3px;top:1009.9px;font-size:11px;color:#000">-</div>
<div class="t" style="right:177.3px;top:1009.9px;font-size:11px;color:#000">-</div>
<div class="t" style="left:288.5px;top:1038.9px;font-size:12.12px;color:#000">Возмещено ФСС расходов на выплату</div>
<div class="t" style="left:288.5px;top:1053.9px;font-size:12.12px;color:#000">страхового обеспечения</div>
<div class="t" style="left:539.0px;width:42.0px;text-align:center;top:1045.8px;font-size:12px;color:#000">080</div>
<div class="t" style="right:499.3px;top:1046.7px;font-size:11px;color:#000">-</div>
<div class="t" style="right:418.3px;top:1046.7px;font-size:11px;color:#000">-</div>
<div class="t" style="right:338.3px;top:1046.7px;font-size:11px;color:#000">-</div>
<div class="t" style="right:257.3px;top:1046.7px;font-size:11px;color:#000">-</div>
<div class="t" style="right:177.3px;top:1046.7px;font-size:11px;color:#000">-</div>
<div class="a" style="left:21px;top:928px;width:1px;height:145px;background:#aaa"></div>
<div class="a" style="left:265px;top:928px;width:1px;height:145px;background:#aaa"></div>
<div class="a" style="left:270px;top:928px;width:1px;height:145px;background:repeating-linear-gradient(#cdcdcd 0 3px,transparent 3px 6px)"></div>
<div class="a" style="left:276px;top:928px;width:1px;height:145px;background:#a8a8a8"></div>
<div class="a" style="left:22px;top:933px;width:229px;height:29px;background:#f9f9f9"></div>
<div class="t" style="left:59.0px;top:940.9px;font-size:13.1px;color:#333">Приложение 4 к Разделу 1</div>
<div class="t" style="left:59.0px;top:969.9px;font-size:13.1px;color:#333">Приложения 5, 6 к Разделу 1</div>
<div class="a" style="left:22px;top:991px;width:229px;height:29px;background:#f9f9f9"></div>
<div class="t" style="left:59.0px;top:998.9px;font-size:13.1px;color:#333">Приложение 7 к Разделу 1</div>
<div class="t" style="left:59.0px;top:1027.9px;font-size:13.1px;color:#333">Приложение 9 к Разделу 1</div>
<div class="a" style="left:22px;top:1049px;width:229px;height:29px;background:#f9f9f9"></div>
<div class="t" style="left:59.0px;top:1056.9px;font-size:13.1px;color:#333">Приложение 10 к Разделу 1</div>
<div class="a" style="left:254px;top:928px;width:8px;height:145px;background:#d4d4d4"></div>
<div class="a" style="left:254px;top:928px;width:8px;height:45px;border-radius:0 0 4px 4px;background:#9c9c9c"></div>
<div class="a" style="left:983px;top:674px;width:6px;height:43px;border:1px solid #f0f0f0;border-left:none;background:#fafafa"></div>
<div class="a" style="left:661px;top:711px;width:83px;height:41px;border:3px solid #e84a4a"></div>
<div class="a" style="left:658px;top:838px;width:85px;height:27px;border:3px solid #0000f5"></div>
<div class="a" style="left:660px;top:973px;width:85px;height:27px;border:3px solid #7acb45"></div>
<svg class="a" style="left:0;top:0" width="1157" height="1073" viewBox="0 0 1157 1073">
<defs><filter id="sh" x="-20%" y="-20%" width="140%" height="140%"><feGaussianBlur in="SourceAlpha" stdDeviation="1.8"/><feOffset dx="0.5" dy="3.5"/><feComponentTransfer><feFuncA type="linear" slope="0.35"/></feComponentTransfer><feMerge><feMergeNode/><feMergeNode in="SourceGraphic"/></feMerge></filter></defs>
<g filter="url(#sh)">
<line x1="248.4" y1="383.3" x2="656.5" y2="705" stroke="#ff0000" stroke-width="3.6"/>
<path d="M662.9 709.9 L652.5 708.8 L660.8 701.2 Z" fill="#ff0000" stroke="#ff0000" stroke-width="1.5" stroke-linejoin="round"/>
<line x1="772.2" y1="357" x2="741.8" y2="830" stroke="#0000ff" stroke-width="3"/>
<path d="M741.3 837.8 L736.6 830.2 L746.2 830.8 Z" fill="#0000ff" stroke="#0000ff" stroke-width="1" stroke-linejoin="round"/>
<line x1="947.9" y1="356.5" x2="746" y2="966" stroke="#7acb45" stroke-width="3"/>
<path d="M743.5 974 L741.8 964.2 L751 967.4 Z" fill="#7acb45" stroke="#7acb45" stroke-width="1" stroke-linejoin="round"/>
</g></svg>

</body></html>
